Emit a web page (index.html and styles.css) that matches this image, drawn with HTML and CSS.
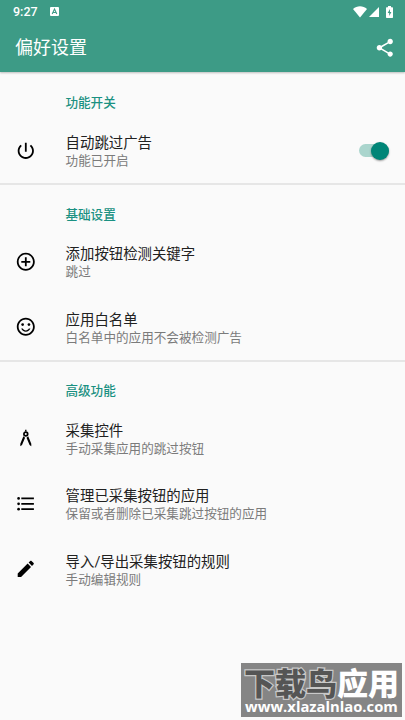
FILE: index.html
```
<!DOCTYPE html>
<html lang="zh-CN">
<head>
    <meta charset="UTF-8" />
    <meta name="viewport" content="width=device-width, initial-scale=1.0" />
    <title>偏好设置</title>
    <link rel="stylesheet" href="styles.css">
</head>
<body>
    <header>
        <div class="status-bar">
            <span class="time">9:27</span>
            <svg class="notice" viewBox="0 0 9 9"><rect width="9" height="9" rx="1" fill="#fff"/><path d="M2.2 7 4.5 2 6.8 7M3 5.5h3" fill="none" stroke="#3d9b86" stroke-width="1.1"/></svg>
            <div class="status-icons">
                <svg width="14" height="12" viewBox="0 0 14 12"><path d="M0 3.1C4 -.6 10 -.6 14 3.1L7 11.5z" fill="#fff"/></svg>
                <svg class="signal" width="10" height="10" viewBox="0 0 10 10"><path d="M10 0v10H0z" fill="#fff"/></svg>
                <svg class="battery" width="7" height="12" viewBox="0 0 7 12"><path d="M2 0h3v1.3h1.3q.7 0 .7.7v9.300q0 .7-.7.7H.7q-.7 0-.7-.7V2q0-.7.7-.7H2z" fill="#fff"/><path d="M4 3 1.700 7h1.500v3L5.400 6H4z" fill="#3d9b86"/></svg>
            </div>
        </div>
        <div class="app-bar">
            <h1>偏好设置</h1>
            <svg class="share" viewBox="0 0 24 24"><path d="M18 16.080c-.76 0-1.440.3-1.960.77L8.910 12.700c.05-.23.09-.46.09-.7s-.04-.47-.09-.7l7.050-4.110c.54.5 1.250.81 2.040.81 1.660 0 3-1.340 3-3s-1.340-3-3-3-3 1.340-3 3c0 .24.04.47.09.7L8.040 9.810C7.500 9.310 6.790 9 6 9c-1.660 0-3 1.340-3 3s1.340 3 3 3c.79 0 1.500-.31 2.040-.81l7.120 4.160c-.05.21-.08.43-.08.65 0 1.610 1.310 2.920 2.920 2.920s2.920-1.310 2.920-2.920-1.310-2.920-2.920-2.920z"/></svg>
        </div>
    </header>

    <main>
        <section>
            <h2>功能开关</h2>
            <div class="item">
                <svg class="icon" viewBox="0 0 24 24"><path d="M13 3h-2v10h2V3zm4.830 2.170-1.420 1.420C17.990 7.860 19 9.810 19 12c0 3.870-3.130 7-7 7s-7-3.130-7-7c0-2.190 1.010-4.140 2.580-5.420L6.170 5.170C4.230 6.820 3 9.260 3 12c0 4.970 4.030 9 9 9s9-4.030 9-9c0-2.740-1.230-5.180-3.170-6.830z"/></svg>
                <div class="text">
                    <h3>自动跳过广告</h3>
                    <p>功能已开启</p>
                </div>
                <div class="switch"></div>
            </div>
        </section>

        <section>
            <h2>基础设置</h2>
            <div class="item">
                <svg class="icon" viewBox="0 0 24 24"><path d="M13 7h-2v4H7v2h4v4h2v-4h4v-2h-4V7zm-1-5C6.490 2 2 6.490 2 12s4.490 10 10 10 10-4.490 10-10S17.510 2 12 2zm0 18c-4.410 0-8-3.590-8-8s3.590-8 8-8 8 3.590 8 8-3.590 8-8 8z"/></svg>
                <div class="text">
                    <h3>添加按钮检测关键字</h3>
                    <p>跳过</p>
                </div>
            </div>
            <div class="item">
                <svg class="icon" viewBox="0 0 24 24"><circle cx="15.500" cy="9.500" r="1.500"/><circle cx="8.500" cy="9.500" r="1.500"/><path d="M12 16c-1.480 0-2.750-.81-3.450-2H6.880c.8 2.050 2.790 3.500 5.120 3.500s4.320-1.450 5.120-3.500h-1.670c-.7 1.190-1.970 2-3.450 2zM12 2C6.490 2 2 6.490 2 12s4.490 10 10 10 10-4.490 10-10S17.510 2 12 2zm0 18c-4.410 0-8-3.590-8-8s3.590-8 8-8 8 3.590 8 8-3.590 8-8 8z"/></svg>
                <div class="text">
                    <h3>应用白名单</h3>
                    <p>白名单中的应用不会被检测广告</p>
                </div>
            </div>
        </section>

        <section>
            <h2>高级功能</h2>
            <div class="item">
                <svg class="icon" viewBox="0 0 24 24"><path d="M11.200 3h1.600v2h-1.600z"/><circle cx="12" cy="7.700" r="2.100" fill="none" stroke="#000" stroke-width="1.900"/><path d="M9.300 10.300 5.900 18.500v2.900l1.900-1.400L11.200 11.900zM14.700 10.300l3.400 8.200v2.900l-1.900-1.400L12.800 11.900z"/></svg>
                <div class="text">
                    <h3>采集控件</h3>
                    <p>手动采集应用的跳过按钮</p>
                </div>
            </div>
            <div class="item">
                <svg class="icon" viewBox="0 0 24 24"><circle cx="4" cy="6" r="1.500"/><circle cx="4" cy="12" r="1.500"/><circle cx="4" cy="18" r="1.500"/><path d="M7 5h14v2H7zM7 11h14v2H7zM7 17h14v2H7z"/></svg>
                <div class="text">
                    <h3>管理已采集按钮的应用</h3>
                    <p>保留或者删除已采集跳过按钮的应用</p>
                </div>
            </div>
            <div class="item">
                <svg class="icon" viewBox="0 0 24 24"><path d="M3 17.250V21h3.750L17.810 9.940l-3.750-3.750L3 17.250zM20.710 7.040c.39-.39.39-1.020 0-1.410l-2.340-2.340c-.39-.39-1.020-.39-1.410 0l-1.830 1.830 3.750 3.750 1.830-1.830z"/></svg>
                <div class="text">
                    <h3>导入/导出采集按钮的规则</h3>
                    <p>手动编辑规则</p>
                </div>
            </div>
        </section>
    </main>

    <div class="watermark">
        <div class="brand"><span>下载鸟</span>应用</div>
        <div class="url">www.xlazalnlao.com</div>
    </div>
</body>
</html>
```
FILE: styles.css
```
* { box-sizing: border-box; }
body { font-family: Roboto, "Noto Sans CJK SC", sans-serif; margin: 0; height: 720px; overflow: hidden; background-color: #fafafa; color: #212121; }
h1, h2, h3, p { margin: 0; font-weight: 400; white-space: nowrap; }
svg { display: block; flex: none; }

header { height: 72px; background-color: #3d9b86; color: white; box-shadow: 0 1px 2px rgba(0, 0, 0, 0.25); }
.status-bar { display: flex; align-items: center; height: 23px; padding: 0 12px 0 13px; }
.time { font-size: 12.5px; font-weight: 500; line-height: 23px; width: 37px; }
.notice { width: 9px; height: 9px; }
.status-icons { display: flex; align-items: center; margin-left: auto; }
.signal { margin-left: 2px; margin-top: 1px; }
.battery { margin-left: 7px; }
.app-bar { display: flex; align-items: center; justify-content: space-between; height: 49px; padding: 0 9.500px 0 15px; }
h1 { font-size: 18px; line-height: 26px; padding-top: 1px; }
.share { width: 21.6px; height: 21.6px; fill: #fff; }

main { padding-top: 0.7px; }
section + section { border-top: 2px solid #e6e6e6; }
section + section h2 { height: 43.6px; padding-top: 20.6px; }
h2 { height: 45.2px; padding: 21px 0 0 65.4px; font-size: 12.6px; line-height: 18px; font-weight: 500; color: #1a9182; }
.item { display: flex; align-items: center; height: 65.4px; padding: 0 16px 0 15px; }
.icon { width: 21.6px; height: 21.6px; fill: #000; }
.text { margin-left: 29px; padding-top: 3.6px; }
h3 { font-size: 14.4px; line-height: 18px; padding-top: 0.6px; }
p { font-size: 12.6px; line-height: 16.4px; color: #7b7b7b; }
.switch { display: flex; align-items: center; justify-content: flex-end; width: 30px; height: 13px; margin-left: auto; border-radius: 7px; background-color: #aad5cd; }
.switch::after { content: ""; flex: none; width: 18px; height: 18px; border-radius: 50%; background-color: #008577; box-shadow: 0 1px 2px rgba(0, 0, 0, 0.4); }

.watermark { position: absolute; left: 241px; top: 663px; width: 161px; height: 54px; padding-top: 3px; background-color: #858585; color: white; text-align: center; white-space: nowrap; }
.brand { font-family: "Noto Sans CJK SC", sans-serif; font-size: 31px; font-weight: 900; line-height: 31px; }
.brand span { color: #555; -webkit-text-stroke: 2.5px #c8c8c8; paint-order: stroke fill; }
.url { font-family: "Open Sans", sans-serif; font-size: 14.8px; font-weight: 700; line-height: 19px; }
```
